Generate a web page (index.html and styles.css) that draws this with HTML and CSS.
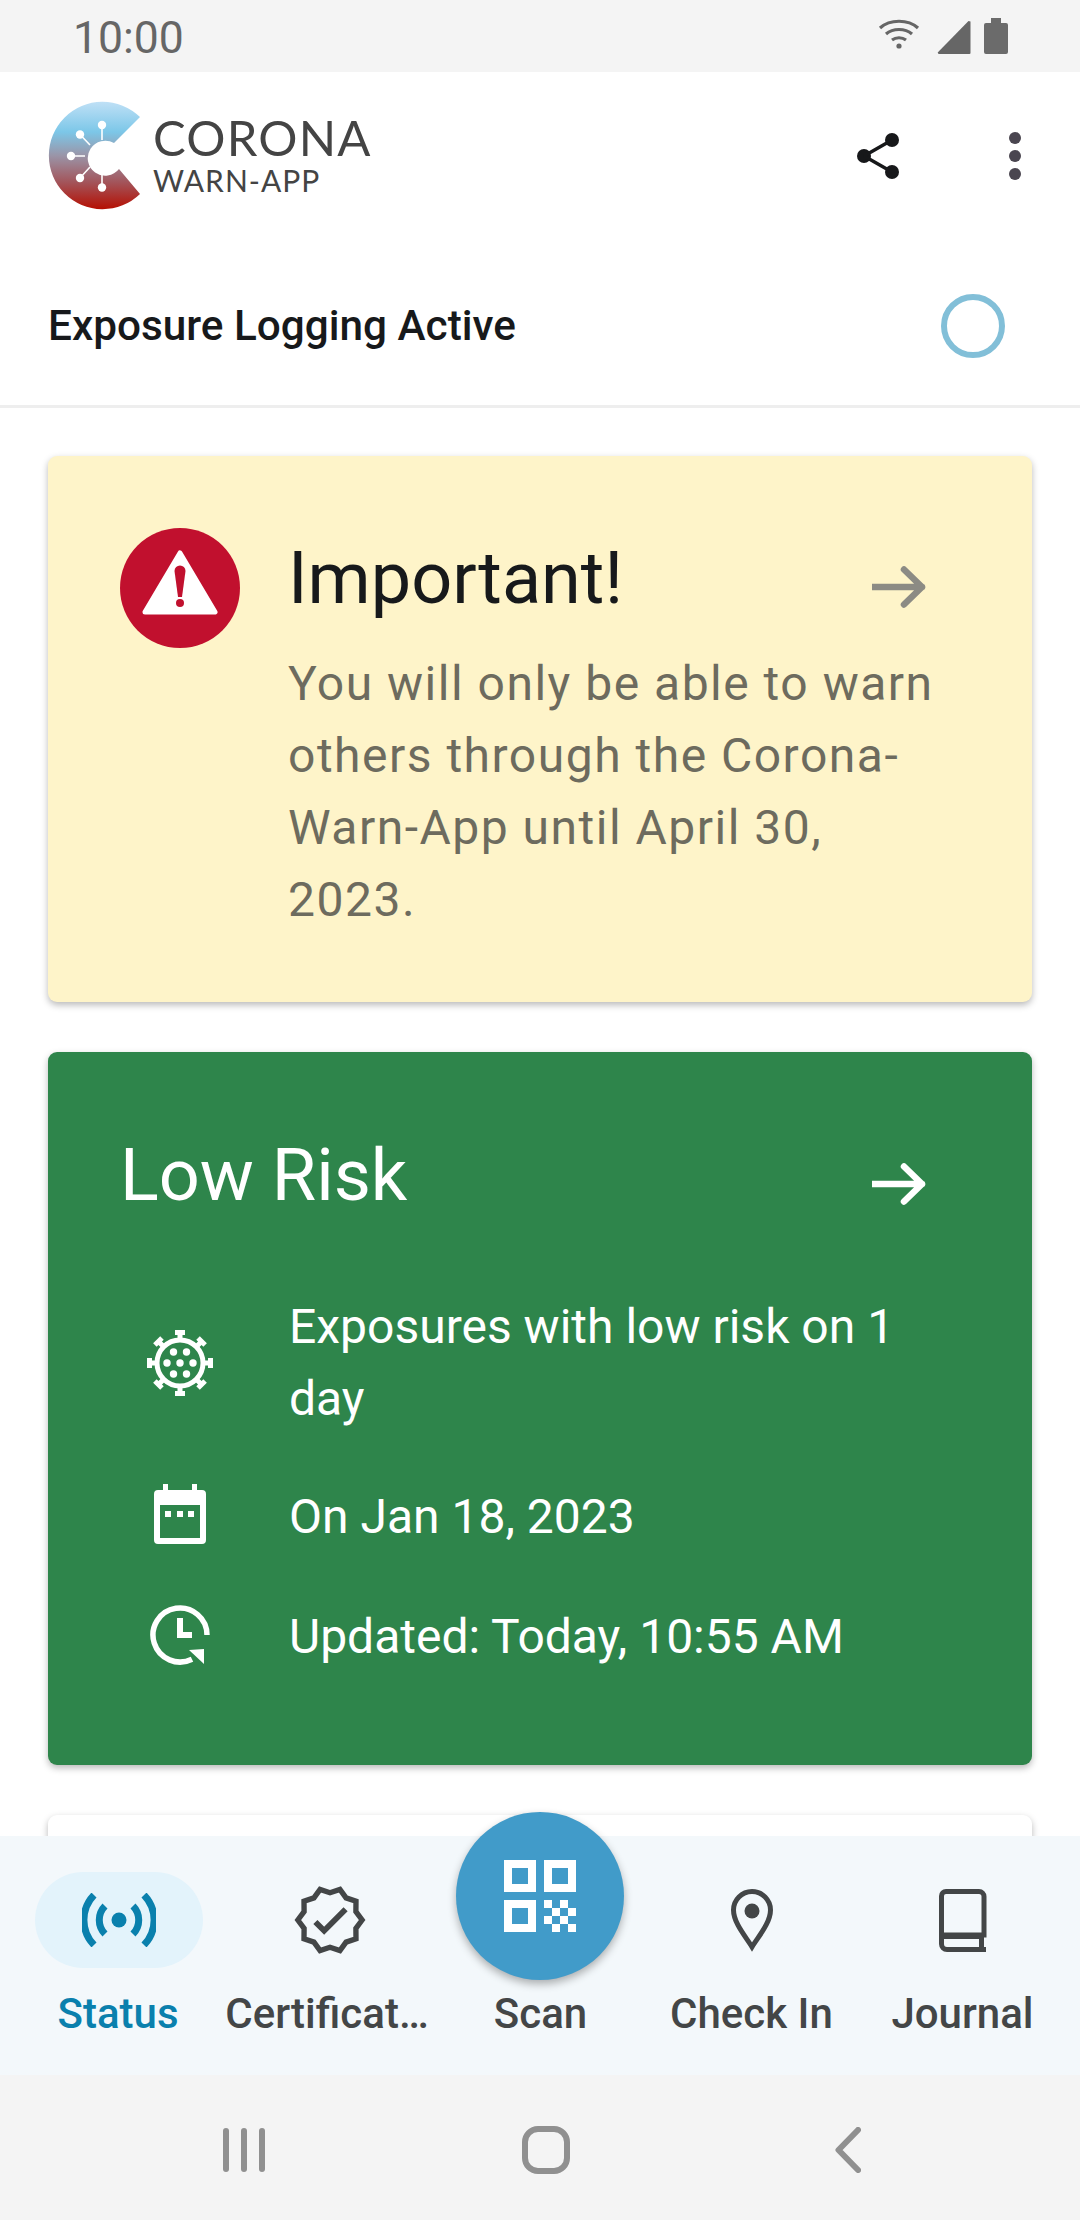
FILE: index.html
```html
<!DOCTYPE html>
<html lang="en">
<head>
<meta charset="utf-8">
<title>Corona-Warn-App</title>
<link rel="stylesheet" href="styles.css">
</head>
<body>
<div class="phone">
  <div class="statusbar">
    <span class="clock">10:00</span>
    <div class="status-icons">
      <svg class="ic-wifi" width="42" height="32" viewBox="0 0 42 32"><g fill="none" stroke="#666" stroke-width="3.2"><path d="M2 10C12 1 30 1 40 10"/><path d="M8 16C15 10 27 10 34 16"/><path d="M14 22C18 19 24 19 28 22"/></g><circle cx="21" cy="28" r="2.6" fill="#666"/></svg>
      <svg class="ic-signal" width="34" height="34" viewBox="0 0 34 34"><path d="M33.500 1.500V33a1 1 0 0 1-1 1H1.500L.7 32.500 31.500 1z" fill="#666"/></svg>
      <svg class="ic-batt" width="24" height="36" viewBox="0 0 24 36"><path d="M7 0h10v5h5a2 2 0 0 1 2 2v27a2 2 0 0 1-2 2H2a2 2 0 0 1-2-2V7a2 2 0 0 1 2-2h5z" fill="#6b6b6b"/></svg>
    </div>
  </div>

  <header class="appbar">
    <div class="brand">
      <svg class="logo" width="96" height="112" viewBox="46 100 96 112">
        <defs>
          <linearGradient id="lg" x1="0" y1="0" x2="0" y2="1">
            <stop offset="0" stop-color="#bfe0f6"/>
            <stop offset=".28" stop-color="#7cc7e8"/>
            <stop offset=".5" stop-color="#9a95a8"/>
            <stop offset=".75" stop-color="#a3545a"/>
            <stop offset="1" stop-color="#b50f02"/>
          </linearGradient>
        </defs>
        <path d="M140 117A53.700 53.700 0 1 0 140 194L119 169A17.500 17.500 0 1 1 114 143Z" fill="url(#lg)"/>
        <g stroke="#fff" stroke-width="1.6">
          <path d="M102 125V140M80 134.500L90 145M71 156H85M80 178L90 167M102 187.500V172"/>
        </g>
        <g fill="#fff">
          <circle cx="102" cy="125" r="4.200"/><circle cx="80" cy="134.500" r="4.200"/><circle cx="71" cy="156" r="4.200"/><circle cx="80" cy="178" r="4.200"/><circle cx="102" cy="187.500" r="4.200"/>
        </g>
      </svg>
      <div class="wordmark">
        <span class="wm-top">CORONA</span>
        <span class="wm-bot">WARN-APP</span>
      </div>
    </div>
    <div class="actions">
      <svg class="ic-share" width="42" height="46" viewBox="0 0 42 46"><g fill="#17181a"><circle cx="7" cy="23" r="7"/><circle cx="35" cy="7" r="7"/><circle cx="35" cy="39" r="7"/></g><path d="M7 23L35 7M7 23L35 39" stroke="#17181a" stroke-width="3.500" fill="none"/></svg>
      <svg class="ic-more" width="12" height="48" viewBox="0 0 12 48"><g fill="#4a4650"><circle cx="6" cy="6" r="6"/><circle cx="6" cy="24" r="6"/><circle cx="6" cy="42" r="6"/></g></svg>
    </div>
  </header>

  <div class="logging">
    <span class="logging-label">Exposure Logging Active</span>
    <svg class="ring" width="64" height="64" viewBox="0 0 64 64"><circle cx="32" cy="32" r="29" fill="none" stroke="#82bfd8" stroke-width="6"/></svg>
  </div>

  <main class="content">
    <section class="card card-warn">
      <svg class="warn-icon" width="120" height="120" viewBox="0 0 120 120">
        <circle cx="60" cy="60" r="60" fill="#c1102e"/>
        <path d="M60 25L95 84H25Z" fill="#fff" stroke="#fff" stroke-width="5" stroke-linejoin="round"/>
        <path d="M54.500 43a5.500 5.500 0 0 1 11 0L62 69h-4Z" fill="#c1102e"/>
        <circle cx="60" cy="75" r="4" fill="#c1102e"/>
      </svg>
      <div class="warn-text">
        <div class="title-row">
          <h2 class="card-title warn-title">Important!</h2>
          <svg class="arrow" width="56" height="44" viewBox="0 0 56 44"><path d="M1 22H50M32 4.500L50 22L32 39.500" fill="none" stroke="#8c8b84" stroke-width="6.500" stroke-linecap="round" stroke-linejoin="round"/></svg>
        </div>
        <p class="warn-body">You will only be able to warn others through the Corona-Warn-App until April 30, 2023.</p>
      </div>
    </section>

    <section class="card card-risk">
      <div class="title-row">
        <h2 class="card-title risk-title">Low Risk</h2>
        <svg class="arrow" width="56" height="44" viewBox="0 0 56 44"><path d="M1 22H50M32 4.500L50 22L32 39.500" fill="none" stroke="#fff" stroke-width="6.500" stroke-linecap="round" stroke-linejoin="round"/></svg>
      </div>
      <div class="risk-rows">
        <div class="risk-row">
          <div class="risk-icon">
            <svg width="68" height="68" viewBox="-34 -34 68 68">
              <circle r="23" fill="none" stroke="#fff" stroke-width="5"/>
              <g fill="#fff">
                <circle r="3.700"/><circle cx="-13" r="3.700"/><circle cx="13" r="3.700"/><circle cx="-6.500" cy="-11" r="3.700"/><circle cx="6.500" cy="-11" r="3.700"/><circle cx="-6.500" cy="11" r="3.700"/><circle cx="6.500" cy="11" r="3.700"/>
              </g>
              <g fill="#fff">
                <path d="M-2.500 -24H2.500V-28H5V-33H-5V-28H-2.500Z"/>
                <path d="M-2.500 -24H2.500V-28H5V-33H-5V-28H-2.500Z" transform="rotate(45)"/>
                <path d="M-2.500 -24H2.500V-28H5V-33H-5V-28H-2.500Z" transform="rotate(90)"/>
                <path d="M-2.500 -24H2.500V-28H5V-33H-5V-28H-2.500Z" transform="rotate(135)"/>
                <path d="M-2.500 -24H2.500V-28H5V-33H-5V-28H-2.500Z" transform="rotate(180)"/>
                <path d="M-2.500 -24H2.500V-28H5V-33H-5V-28H-2.500Z" transform="rotate(225)"/>
                <path d="M-2.500 -24H2.500V-28H5V-33H-5V-28H-2.500Z" transform="rotate(270)"/>
                <path d="M-2.500 -24H2.500V-28H5V-33H-5V-28H-2.500Z" transform="rotate(315)"/>
              </g>
            </svg>
          </div>
          <p class="risk-text">Exposures with low risk on 1 day</p>
        </div>
        <div class="risk-row row-date">
          <div class="risk-icon">
            <svg class="ic-cal" width="52" height="60" viewBox="0 0 52 60">
              <path fill="#fff" fill-rule="evenodd" d="M9 0h5v6h24V0h5v6h5a4 4 0 0 1 4 4v46a4 4 0 0 1-4 4H4a4 4 0 0 1-4-4V10a4 4 0 0 1 4-4h5zM6 21v33h40V21zM11 27h6v6h-6zM23 27h6v6h-6zM34 27h6v6h-6z"/>
            </svg>
          </div>
          <p class="risk-text">On Jan 18, 2023</p>
        </div>
        <div class="risk-row row-upd">
          <div class="risk-icon">
            <svg class="ic-clock" width="60" height="60" viewBox="0 0 60 60">
              <path d="M57 30A27 27 0 1 0 42 54.200" fill="none" stroke="#fff" stroke-width="5.500"/>
              <path d="M54 44V59L39 45Z" fill="#fff"/>
              <path d="M27 13h6v20h-6zM27 27h15v6H27z" fill="#fff"/>
            </svg>
          </div>
          <p class="risk-text">Updated: Today, 10:55 AM</p>
        </div>
      </div>
    </section>

    <section class="card card-blank"></section>
  </main>

  <nav class="tabs">
    <div class="tab tab-active">
      <div class="tab-icon pill">
        <svg width="74" height="54" viewBox="-37 -27 74 54">
          <circle r="7.500" fill="#0a80ad"/>
          <g fill="none" stroke="#0a80ad" stroke-width="7">
            <path d="M-14 -14A20 20 0 0 0 -14 14M14 -14A20 20 0 0 1 14 14"/>
            <path d="M-25 -25A36 36 0 0 0 -25 25M25 -25A36 36 0 0 1 25 25"/>
          </g>
        </svg>
      </div>
      <span class="tab-label">Status</span>
    </div>
    <div class="tab">
      <div class="tab-icon">
        <svg width="74" height="74" viewBox="-38 -38 76 76">
          <polygon points="33,0 26.600,8.650 26.700,19.400 16.500,22.700 10.200,31.400 0,28 -10.200,31.400 -16.500,22.700 -26.700,19.400 -26.600,8.650 -33,0 -26.600,-8.650 -26.700,-19.400 -16.500,-22.700 -10.200,-31.400 0,-28 10.200,-31.400 16.500,-22.700 26.700,-19.400 26.600,-8.650" fill="none" stroke="#434647" stroke-width="5.500"/>
          <path d="M-15 2L-6 11L16 -11" fill="none" stroke="#434647" stroke-width="6"/>
        </svg>
      </div>
      <span class="tab-label label-cert">Certificat…</span>
    </div>
    <div class="tab">
      <div class="tab-icon"></div>
      <span class="tab-label">Scan</span>
      <div class="fab">
        <svg width="72" height="72" viewBox="0 0 72 72">
          <path fill="#fff" fill-rule="evenodd" d="M0 0h32v32H0zM8 8v16h16V8zM40 0h32v32H40zM48 8v16h16V8zM0 40h32v32H0zM8 48v16h16V48z"/>
          <path fill="#fff" d="M40 40h8v8h-8zM56 40h8v8h-8zM48 48h8v8h-8zM64 48h8v8h-8zM40 56h8v8h-8zM56 56h8v8h-8zM48 64h8v8h-8zM64 64h8v8h-8z"/>
        </svg>
      </div>
    </div>
    <div class="tab">
      <div class="tab-icon">
        <svg class="ic-pin" width="46" height="64" viewBox="-23 -23 46 64">
          <path d="M0 36C-6 26 -18.500 12 -18.500 -1A18.500 18.500 0 0 1 18.500 -1C18.500 12 6 26 0 36Z" fill="none" stroke="#434647" stroke-width="5"/>
          <circle r="7.500" fill="#434647"/>
        </svg>
      </div>
      <span class="tab-label">Check In</span>
    </div>
    <div class="tab">
      <div class="tab-icon">
        <svg width="48" height="63" viewBox="0 0 48 63">
          <path d="M7 2.500H40a5 5 0 0 1 5 5V46H2.500V7A4.500 4.500 0 0 1 7 2.500Z" fill="none" stroke="#434647" stroke-width="5"/>
          <path d="M2.500 46V55A5.500 5.500 0 0 0 8 60.500H47" fill="none" stroke="#434647" stroke-width="5"/>
          <path d="M4 45H45V50H4z" fill="#434647"/>
          <path d="M40 49h5V59h-5z" fill="#434647"/>
        </svg>
      </div>
      <span class="tab-label">Journal</span>
    </div>
  </nav>

  <div class="sysnav">
    <svg width="42" height="44" viewBox="0 0 42 44"><g fill="#909090"><rect width="6" height="44" rx="3"/><rect x="18" width="6" height="44" rx="3"/><rect x="36" width="6" height="44" rx="3"/></g></svg>
    <svg class="sys-home" width="48" height="48" viewBox="0 0 48 48"><rect x="3" y="3" width="42" height="42" rx="13" fill="none" stroke="#909090" stroke-width="6"/></svg>
    <svg class="sys-back" width="26" height="46" viewBox="0 0 26 46"><path d="M23 3L3.500 23L23 43" fill="none" stroke="#909090" stroke-width="6" stroke-linecap="round" stroke-linejoin="round"/></svg>
  </div>
</div>
</body>
</html>
```
FILE: styles.css
```css
* { box-sizing: border-box; }
html, body { margin: 0; padding: 0; }
body { font-family: Roboto, "Liberation Sans", sans-serif; background: #fff; }
h2, p { margin: 0; font-weight: 400; }
svg { display: block; flex: none; }

.phone {
  width: 1080px;
  height: 2220px;
  display: flex;
  flex-direction: column;
  overflow: hidden;
  background: #fff;
}

.statusbar {
  height: 72px;
  flex: none;
  background: #f4f4f4;
  display: flex;
  align-items: flex-start;
  justify-content: space-between;
  padding: 18px 72px 0 73px;
}
.clock { font-size: 44.5px; line-height: 40px; color: #666; }
.status-icons { display: flex; align-items: flex-start; }
.ic-signal { margin: 2px 13px 0 17px; }

.appbar {
  height: 168px;
  flex: none;
  display: flex;
  align-items: center;
  justify-content: space-between;
  padding: 0 59px 0 46px;
}
.brand { display: flex; align-items: center; gap: 11px; }
.wordmark { display: flex; flex-direction: column; color: #444; font-family: Lato, sans-serif; margin-top: -2px; }
.wm-top { font-size: 49px; line-height: 50px; letter-spacing: 1.2px; }
.wm-bot { font-size: 30px; line-height: 36px; letter-spacing: 1px; }
.actions { display: flex; align-items: center; gap: 110px; }

.logging {
  height: 168px;
  flex: none;
  display: flex;
  align-items: center;
  justify-content: space-between;
  padding: 5px 75px 0 48px;
  border-bottom: 3px solid #eee;
}
.ring { margin-top: 2px; }
.logging-label { font-size: 42.3px; font-weight: 500; color: #17191b; }

.content {
  flex: 1;
  min-height: 0;
  overflow: hidden;
  padding: 48px 48px 0;
  display: flex;
  flex-direction: column;
  gap: 50px;
}

.card { border-radius: 9px; box-shadow: 0 3px 7px rgba(0, 0, 0, .28); flex: none; }

.card-warn {
  height: 546px;
  background: #fef4c9;
  display: flex;
  align-items: flex-start;
  gap: 48px;
  padding: 72px 88px 0 72px;
}
.warn-text { flex: 1; min-width: 0; margin-top: 9px; }
.title-row { display: flex; align-items: center; justify-content: space-between; }
.arrow { margin: 16px 16px 0 0; }
.card-title { font-size: 72px; line-height: 84px; }
.warn-title { color: #17191b; }
.warn-body {
  margin-top: 27px;
  font-size: 48px;
  line-height: 72px;
  letter-spacing: 1.5px;
  color: #6d6b5e;
}

.card-risk {
  height: 713px;
  background: #2e854b;
  color: #fff;
  padding: 82px 88px 0 72px;
}
.risk-rows { margin-top: 73px; display: flex; flex-direction: column; }
.risk-row { display: flex; align-items: center; }
.risk-icon { width: 169px; display: flex; justify-content: center; padding-right: 49px; flex: none; }
.risk-text { font-size: 48px; line-height: 72px; }
.row-date { margin-top: 46px; }
.row-upd { margin-top: 48px; }
.ic-cal { margin-top: -6px; }
.ic-clock { margin-top: -4px; }

.card-blank { height: 300px; background: #fff; }

.tabs {
  position: relative;
  height: 239px;
  flex: none;
  background: #f3f8fb;
  display: grid;
  grid-template-columns: repeat(5, 211px);
  padding: 36px 12px 0 13px;
}
.tab { position: relative; display: flex; flex-direction: column; align-items: center; }
.tab-icon {
  width: 168px;
  height: 96px;
  border-radius: 48px;
  flex: none;
  display: flex;
  align-items: center;
  justify-content: center;
}
.pill { background: #e3f3fb; }
.tab-label {
  margin-top: 22px;
  font-size: 42px;
  line-height: 48px;
  font-weight: 500;
  color: #434647;
  white-space: nowrap;
}
.tab-active .tab-label { color: #0a80ad; margin-right: 1px; }
.label-cert { margin-right: 5px; }

.fab {
  position: absolute;
  left: 21px;
  top: -60px;
  width: 168px;
  height: 168px;
  border-radius: 50%;
  background: #419bc9;
  box-shadow: 0 4px 8px rgba(0, 0, 0, .3);
  display: flex;
  align-items: center;
  justify-content: center;
}

.sysnav {
  height: 145px;
  flex: none;
  background: #f4f4f4;
  display: flex;
  align-items: center;
  padding: 5px 0 0 223px;
}
.sys-home { margin-left: 257px; }
.sys-back { margin-left: 265px; }
```
